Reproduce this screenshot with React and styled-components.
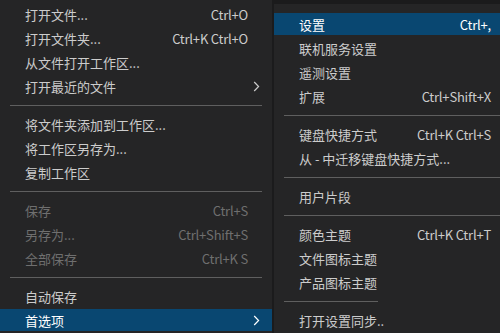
import React from "react";
import styled, { createGlobalStyle } from "styled-components";

const GlobalStyle = createGlobalStyle`
  body {
    margin: 0;
    background: #1b1b1c;
    overflow: hidden;
    font-family: "Noto Sans CJK SC", "Noto Sans", sans-serif;
  }
`;

const Screen = styled.div`
  display: flex;
  gap: 2px;
  width: 500px;
  height: 333px;
  overflow: hidden;
`;

const Menu = styled.div`
  display: flex;
  flex-direction: column;
  flex-shrink: 0;
  width: ${(p) => p.$width}px;
  margin-top: ${(p) => p.$top || 0}px;
  padding-top: ${(p) => p.$pad || 0}px;
  background: #252526;
  box-sizing: border-box;
`;

const Item = styled.div`
  display: flex;
  align-items: center;
  flex-shrink: 0;
  height: 22px;
  margin: 1px 0;
  padding: 0 10px 0 25px;
  font-size: 13px;
  color: ${(p) => (p.$active ? "#ffffff" : p.$disabled ? "#6f6f6f" : "#cccccc")};
  background: ${(p) => (p.$active ? "#094771" : "transparent")};
  white-space: nowrap;
`;

const Label = styled.span`
  flex: 1;
`;

const Shortcut = styled.span`
  margin-left: 20px;
  letter-spacing: -0.2px;
`;

const Indicator = styled.span`
  display: flex;
  justify-content: flex-end;
  align-items: center;
  width: 14px;
  padding-right: 2px;
  box-sizing: border-box;
`;

const Separator = styled.div`
  flex-shrink: 0;
  height: 1px;
  margin: 7px 10px 6px;
  width: ${(p) => (p.$width ? `${p.$width}px` : "auto")};
  background: #5f5f5f;
`;

const Chevron = () => (
  <svg width="7" height="11" viewBox="0 0 7 11">
    <path d="M1.2 1 L5.6 5.5 L1.2 10" fill="none" stroke="currentColor" strokeWidth="1.2" />
  </svg>
);

const fileMenu = [
  { label: "打开文件...", key: "Ctrl+O" },
  { label: "打开文件夹...", key: "Ctrl+K Ctrl+O" },
  { label: "从文件打开工作区..." },
  { label: "打开最近的文件", sub: true },
  "sep",
  { label: "将文件夹添加到工作区..." },
  { label: "将工作区另存为..." },
  { label: "复制工作区" },
  "sep",
  { label: "保存", key: "Ctrl+S", disabled: true },
  { label: "另存为...", key: "Ctrl+Shift+S", disabled: true },
  { label: "全部保存", key: "Ctrl+K S", disabled: true },
  "sep",
  { label: "自动保存" },
  { label: "首选项", sub: true, active: true },
];

const prefsMenu = [
  { label: "设置", key: "Ctrl+,", active: true },
  { label: "联机服务设置" },
  { label: "遥测设置" },
  { label: "扩展", key: "Ctrl+Shift+X" },
  "sep",
  { label: "键盘快捷方式", key: "Ctrl+K Ctrl+S" },
  { label: "从 - 中迁移键盘快捷方式..." },
  "sep",
  { label: "用户片段" },
  "sep",
  { label: "颜色主题", key: "Ctrl+K Ctrl+T" },
  { label: "文件图标主题" },
  { label: "产品图标主题" },
  { sep: true, width: 94 },
  { label: "打开设置同步.." },
];

const MenuList = ({ items }) =>
  items.map((item, i) => {
    if (item === "sep") return <Separator key={i} />;
    if (item.sep) return <Separator key={i} $width={item.width} />;
    return (
      <Item key={i} $active={item.active} $disabled={item.disabled}>
        <Label>{item.label}</Label>
        {item.key && <Shortcut>{item.key}</Shortcut>}
        <Indicator>{item.sub && <Chevron />}</Indicator>
      </Item>
    );
  });

export default function App() {
  return (
    <>
      <GlobalStyle />
      <Screen>
        <Menu $width={272} $pad={2}>
          <MenuList items={fileMenu} />
        </Menu>
        <Menu $width={241} $top={4} $pad={8}>
          <MenuList items={prefsMenu} />
        </Menu>
      </Screen>
    </>
  );
}
